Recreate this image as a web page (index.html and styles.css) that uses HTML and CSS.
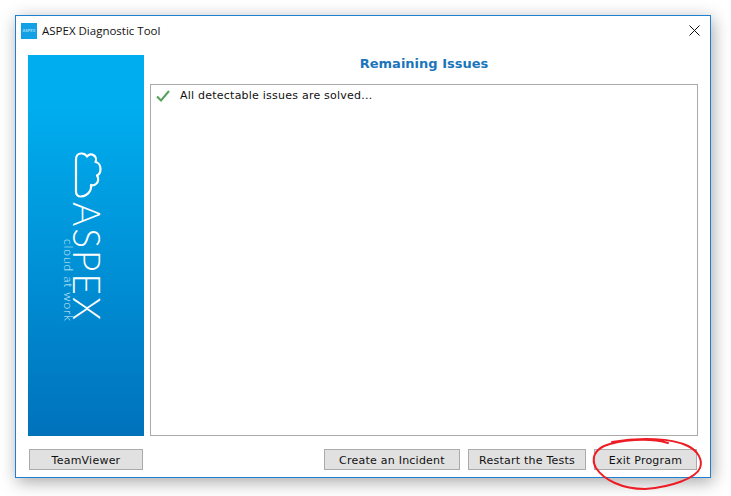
FILE: index.html
```html
<!DOCTYPE html>
<html lang="en">
<head>
<meta charset="utf-8">
<title>ASPEX Diagnostic Tool</title>
<link rel="stylesheet" href="styles.css">
</head>
<body>
<div class="window">
  <header class="titlebar">
    <span class="app-icon"><span class="app-icon-text">ASPEX</span></span>
    <span class="title">ASPEX Diagnostic Tool</span>
    <svg class="close" width="11" height="11" viewBox="0 0 11 11"><path d="M.5.5l10 10M10.500.5l-10 10" stroke="#111" stroke-width="1" fill="none"/></svg>
  </header>
  <main class="content">
    <aside class="banner">
      <div class="logo">
        <svg class="cloud" width="28" height="46" viewBox="0 0 28 46"><path d="M2 7.500C2 4 4 1.500 7 1.500H8C10.500 1.500 12 3 13 4.500C15 1.800 18 2 20 3.500C22 5 22.500 8 21.500 10C24.500 10.500 26.500 13.500 26.500 17C26.500 20 25 22.500 23 23.500C25 26 24.500 30 22 32C20.500 33.200 18.500 33.500 17 33C17.500 37 15.500 41 12 43C10.500 44 8.500 44.500 6.500 44.500C4 44.500 2 42.500 2 40Z" fill="none" stroke="#fff" stroke-width="2.200" stroke-linejoin="round"/></svg>
        <div class="wordmark">
          <span class="tagline">cloud at work</span>
          <span class="brand">ASPEX</span>
        </div>
      </div>
    </aside>
    <section class="panel">
      <h1 class="heading">Remaining Issues</h1>
      <div class="issues">
        <div class="issue">
          <svg class="check" width="14" height="12" viewBox="0 0 14 12"><path d="M1 6.500L5 10.500L13 1" fill="none" stroke="#56a05a" stroke-width="2"/></svg>
          <span>All detectable issues are solved...</span>
        </div>
      </div>
    </section>
  </main>
  <footer class="actions">
    <button class="btn btn-tv">TeamViewer</button>
    <div class="actions-right">
      <button class="btn btn-create">Create an Incident</button>
      <button class="btn btn-restart">Restart the Tests</button>
      <button class="btn btn-exit">Exit Program</button>
    </div>
  </footer>
</div>
<svg class="scribble" width="731" height="496" viewBox="0 0 731 496"><path d="M612 442C640 437 672 438 688 446C698 451 703 460 700 468C696 478 672 487 645 489C622 489 604 480 596 468C591 459 594 451 604 446C620 440 648 437 668 443" fill="none" stroke="#ee1c25" stroke-width="2" stroke-linecap="round"/></svg>
</body>
</html>
```
FILE: styles.css
```css
* { box-sizing: border-box; }
html, body { margin: 0; height: 100%; }
body {
  position: relative;
  width: 731px;
  height: 496px;
  padding: 15px 20px 18px 15px;
  background: #fff;
  overflow: hidden;
  font-family: "DejaVu Sans", sans-serif;
  font-size: 11px;
  letter-spacing: .23px;
  color: #111;
}
.window {
  width: 696px;
  height: 463px;
  border: 1px solid #1f7fd1;
  background: #fff;
  display: flex;
  flex-direction: column;
  box-shadow: 2px 4px 16px rgba(0, 0, 0, .35);
}
.titlebar {
  height: 29px;
  flex: none;
  display: flex;
  align-items: center;
  padding: 0 10px 0 5px;
}
.app-icon {
  width: 16px;
  height: 16px;
  background: #14a0e4;
  display: flex;
  align-items: center;
  justify-content: center;
  overflow: hidden;
}
.app-icon-text { font-size: 4px; letter-spacing: 0; color: #cfeefc; }
.title {
  margin-left: 5px;
  flex: 1;
  font-family: "Open Sans", sans-serif;
  font-size: 11.500px;
  letter-spacing: 0;
  color: #111;
}
.close { flex: none; }
.content {
  height: 381px;
  margin-top: 10px;
  flex: none;
  display: flex;
  padding: 0 12px;
  gap: 6px;
}
.banner {
  width: 116px;
  flex: none;
  background: linear-gradient(#00aeef 0%, #00aeef 12%, #0072bc 100%);
  display: flex;
  justify-content: center;
  padding-top: 97px;
}
.logo {
  display: flex;
  flex-direction: column;
  align-items: flex-end;
  width: 38px;
  margin-right: 8px;
  color: #fff;
}
.cloud { flex: none; margin-right: -1px; }
.wordmark {
  display: flex;
  gap: 0;
  margin-top: 4px;
  letter-spacing: 0;
}
.brand {
  writing-mode: vertical-rl;
  font-family: "Lato", "Open Sans", sans-serif;
  font-weight: 300;
  font-size: 37px;
  line-height: 28px;
  letter-spacing: 2px;
}
.tagline {
  writing-mode: vertical-rl;
  font-family: "Lato", "Open Sans", sans-serif;
  font-weight: 300;
  font-size: 12px;
  line-height: 10px;
  letter-spacing: 1px;
  align-self: flex-end;
  color: #d5effc;
}
.panel {
  flex: 1;
  display: flex;
  flex-direction: column;
}
.heading {
  margin: 0;
  height: 29px;
  flex: none;
  padding-top: 1px;
  text-align: center;
  font-size: 13px;
  font-weight: 700;
  line-height: 16px;
  letter-spacing: 0;
  color: #1b75bb;
}
.issues {
  flex: 1;
  border: 1px solid #ababab;
  padding: 3px 5px;
}
.issue {
  display: flex;
  align-items: center;
  gap: 10px;
  height: 15px;
  color: #111;
}
.check { flex: none; }
.actions {
  display: flex;
  justify-content: space-between;
  padding: 13px 13px 0;
}
.actions-right { display: flex; gap: 8px; }
.btn {
  height: 21px;
  padding: 1px 0 0;
  border: 1px solid #ababab;
  border-radius: 0;
  background: #e1e1e1;
  font-family: "DejaVu Sans", sans-serif;
  font-size: 11px;
  letter-spacing: .23px;
  color: #111;
}
.btn-tv { width: 114px; }
.btn-create { width: 136px; }
.btn-restart { width: 118px; }
.btn-exit { width: 103px; }
.scribble {
  position: absolute;
  left: 0;
  top: 0;
  pointer-events: none;
}
```
